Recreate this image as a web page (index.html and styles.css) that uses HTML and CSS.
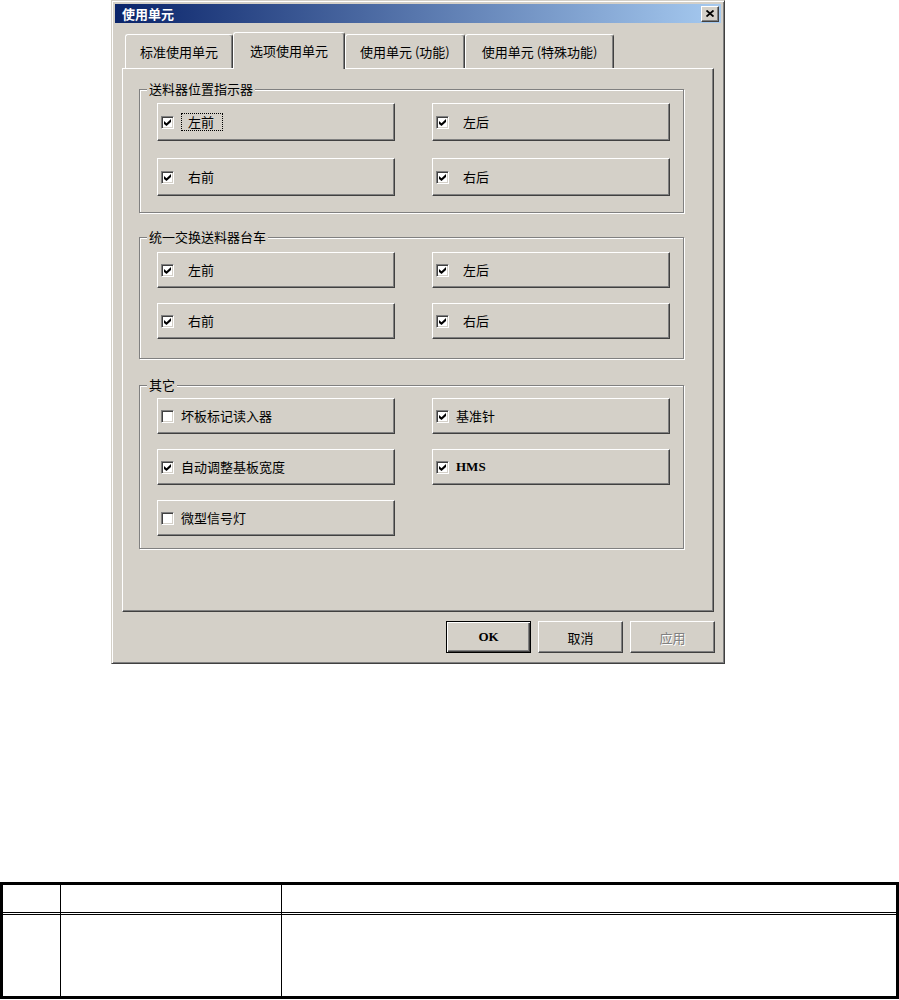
FILE: index.html
```html
<!DOCTYPE html>
<html lang="zh-CN">
<head>
    <meta charset="UTF-8">
    <meta name="viewport" content="width=device-width, initial-scale=1.0">
    <title>使用单元</title>
    <link rel="stylesheet" href="styles.css">
</head>
<body>
    <div class="dialog">
        <div class="titlebar">
            <span class="title">使用单元</span>
            <span class="close-btn">
                <svg width="8" height="7" viewBox="0 0 8 7"><path d="M0.5 0.5 L7.5 6.5 M7.5 0.5 L0.5 6.5" stroke="#000" stroke-width="1.8" fill="none"/></svg>
            </span>
        </div>

        <div class="tabs">
            <div class="tab">标准使用单元</div>
            <div class="tab tab-active">选项使用单元</div>
            <div class="tab">使用单元 (功能)</div>
            <div class="tab tab-wide">使用单元 (特殊功能)</div>
        </div>

        <div class="panel">
            <fieldset class="group group-first">
                <legend>送料器位置指示器</legend>
                <div class="options">
                    <label class="option">
                        <span class="box"><svg width="7" height="7" viewBox="0 0 7 7"><polygon points="0,2 2.5,4.3 7,0 7,3 2.5,7 0,5"/></svg></span>
                        <span class="option-text focus">左前</span>
                    </label>
                    <label class="option">
                        <span class="box"><svg width="7" height="7" viewBox="0 0 7 7"><polygon points="0,2 2.5,4.3 7,0 7,3 2.5,7 0,5"/></svg></span>
                        <span class="option-text">左后</span>
                    </label>
                    <label class="option">
                        <span class="box"><svg width="7" height="7" viewBox="0 0 7 7"><polygon points="0,2 2.5,4.3 7,0 7,3 2.5,7 0,5"/></svg></span>
                        <span class="option-text">右前</span>
                    </label>
                    <label class="option">
                        <span class="box"><svg width="7" height="7" viewBox="0 0 7 7"><polygon points="0,2 2.5,4.3 7,0 7,3 2.5,7 0,5"/></svg></span>
                        <span class="option-text">右后</span>
                    </label>
                </div>
            </fieldset>

            <fieldset class="group">
                <legend>统一交换送料器台车</legend>
                <div class="options">
                    <label class="option">
                        <span class="box"><svg width="7" height="7" viewBox="0 0 7 7"><polygon points="0,2 2.5,4.3 7,0 7,3 2.5,7 0,5"/></svg></span>
                        <span class="option-text">左前</span>
                    </label>
                    <label class="option">
                        <span class="box"><svg width="7" height="7" viewBox="0 0 7 7"><polygon points="0,2 2.5,4.3 7,0 7,3 2.5,7 0,5"/></svg></span>
                        <span class="option-text">左后</span>
                    </label>
                    <label class="option">
                        <span class="box"><svg width="7" height="7" viewBox="0 0 7 7"><polygon points="0,2 2.5,4.3 7,0 7,3 2.5,7 0,5"/></svg></span>
                        <span class="option-text">右前</span>
                    </label>
                    <label class="option">
                        <span class="box"><svg width="7" height="7" viewBox="0 0 7 7"><polygon points="0,2 2.5,4.3 7,0 7,3 2.5,7 0,5"/></svg></span>
                        <span class="option-text">右后</span>
                    </label>
                </div>
            </fieldset>

            <fieldset class="group group-last">
                <legend>其它</legend>
                <div class="options">
                    <label class="option">
                        <span class="box"></span>
                        <span class="option-text plain">坏板标记读入器</span>
                    </label>
                    <label class="option">
                        <span class="box"><svg width="7" height="7" viewBox="0 0 7 7"><polygon points="0,2 2.5,4.3 7,0 7,3 2.5,7 0,5"/></svg></span>
                        <span class="option-text plain">基准针</span>
                    </label>
                    <label class="option">
                        <span class="box"><svg width="7" height="7" viewBox="0 0 7 7"><polygon points="0,2 2.5,4.3 7,0 7,3 2.5,7 0,5"/></svg></span>
                        <span class="option-text plain">自动调整基板宽度</span>
                    </label>
                    <label class="option">
                        <span class="box"><svg width="7" height="7" viewBox="0 0 7 7"><polygon points="0,2 2.5,4.3 7,0 7,3 2.5,7 0,5"/></svg></span>
                        <span class="option-text plain latin">HMS</span>
                    </label>
                    <label class="option">
                        <span class="box"></span>
                        <span class="option-text plain">微型信号灯</span>
                    </label>
                </div>
            </fieldset>
        </div>

        <div class="actions">
            <button class="btn btn-default latin">OK</button>
            <button class="btn">取消</button>
            <button class="btn" disabled>应用</button>
        </div>
    </div>

    <table class="desc">
        <thead>
            <tr>
                <th class="col-no"></th>
                <th class="col-name"></th>
                <th class="col-text"></th>
            </tr>
        </thead>
        <tbody>
            <tr>
                <td class="col-no"></td>
                <td class="col-name"></td>
                <td class="col-text"></td>
            </tr>
        </tbody>
    </table>
</body>
</html>
```

FILE: styles.css
```css
* {
    box-sizing: border-box;
}

body {
    margin: 0;
    background-color: #fff;
    color: #000;
    font-family: "Noto Sans CJK SC", "Liberation Sans", sans-serif;
    font-size: 13px;
}

.latin {
    font-family: "Liberation Serif", "Noto Sans CJK SC", serif;
    font-weight: bold;
}

/* window frame */
.dialog {
    width: 614px;
    margin-left: 111px;
    padding: 3px;
    background-color: #d4d0c8;
    border: 1px solid;
    border-color: #d4d0c8 #404040 #404040 #d4d0c8;
    box-shadow: inset 1px 1px #fff, inset -1px -1px #808080;
}

.titlebar {
    height: 19px;
    display: flex;
    align-items: center;
    justify-content: space-between;
    padding: 0 2px 0 7px;
    background: linear-gradient(to right, #0a246a, #a6caf0);
    color: #fff;
    font-weight: bold;
    line-height: 19px;
}

.close-btn {
    width: 18px;
    height: 16px;
    display: flex;
    align-items: center;
    justify-content: center;
    background-color: #d4d0c8;
    border: 1px solid;
    border-color: #fff #404040 #404040 #fff;
    box-shadow: inset -1px -1px #808080;
}

/* tabs */
.tabs {
    height: 45px;
    display: flex;
    align-items: flex-end;
    padding-left: 10px;
}

.tab {
    height: 34px;
    display: flex;
    align-items: center;
    padding: 0 14px;
    border: 1px solid;
    border-bottom: none;
    border-color: #fff #404040 #404040 #fff;
    border-radius: 3px 3px 0 0;
    box-shadow: inset -1px 0 #808080;
    white-space: nowrap;
}

.tab-active {
    position: relative;
    height: 37px;
    margin-bottom: -1px;
    padding: 0 16px 2px;
    background-color: #d4d0c8;
}

.tab-wide {
    padding: 0 16px;
}

.panel {
    height: 544px;
    margin: 0 7px;
    padding: 12px 29px 0 16px;
    border: 1px solid;
    border-color: #fff #404040 #404040 #fff;
    box-shadow: inset -1px -1px #808080;
}

/* group boxes */
.group {
    min-width: 0;
    margin: 16px 0 0;
    padding: 0;
    border: 1px solid #808080;
    box-shadow: inset 1px 1px #fff, 1px 1px #fff;
}

.group legend {
    margin-left: 7px;
    padding: 0 2px;
    line-height: 16px;
    background-color: #d4d0c8;
}

.group-first {
    margin-top: 0;
}

.group-last {
    margin-top: 18px;
}

.options {
    display: grid;
    grid-template-columns: 1fr 1fr;
    grid-auto-rows: 36px;
    column-gap: 37px;
    row-gap: 15px;
    padding: 7px 13px 19px 17px;
}

.group-first .options {
    grid-auto-rows: 38px;
    row-gap: 17px;
    padding-top: 6px;
    padding-bottom: 16px;
}

.group-last .options {
    padding-top: 5px;
    padding-bottom: 12px;
}

.option {
    display: flex;
    align-items: center;
    padding-left: 3px;
    border: 1px solid;
    border-color: #fff #404040 #404040 #fff;
    box-shadow: inset -1px -1px #808080;
}

.box {
    width: 13px;
    height: 13px;
    flex: none;
    display: flex;
    align-items: center;
    justify-content: center;
    background-color: #fff;
    border: 1px solid;
    border-color: #808080 #fff #fff #808080;
    box-shadow: inset 1px 1px #404040, inset -1px -1px #d4d0c8;
}

.option-text {
    margin-left: 7px;
    padding: 0 8px 0 6px;
    border: 1px dotted transparent;
    line-height: 16px;
}

.option-text.focus {
    border-color: #000;
}

.option-text.plain {
    padding: 0;
    border: none;
}

/* dialog buttons */
.actions {
    display: flex;
    justify-content: flex-end;
    gap: 7px;
    margin-top: 9px;
    padding: 0 6px 7px 0;
}

.btn {
    width: 85px;
    height: 32px;
    padding: 0;
    font-size: 13px;
    color: #000;
    background-color: #d4d0c8;
    border: 1px solid;
    border-color: #fff #404040 #404040 #fff;
    box-shadow: inset -1px -1px #808080;
}

.btn:not(.latin) {
    font-family: inherit;
}

.btn-default {
    border-color: #000;
    box-shadow: inset 1px 1px #fff, inset -1px -1px #404040, inset -2px -2px #808080;
}

.btn:disabled {
    color: #808080;
    text-shadow: 1px 1px #fff;
}

/* description table */
.desc {
    width: 899px;
    margin-top: 218px;
    border: 3px solid #000;
    border-spacing: 0;
    table-layout: fixed;
}

.desc th,
.desc td {
    padding: 0;
    border-right: 1px solid #000;
}

.desc th {
    height: 30px;
    border-bottom: 3px double #000;
}

.desc td {
    height: 81px;
}

.desc .col-no {
    width: 58px;
}

.desc .col-name {
    width: 221px;
}

.desc .col-text {
    border-right: none;
}
```
